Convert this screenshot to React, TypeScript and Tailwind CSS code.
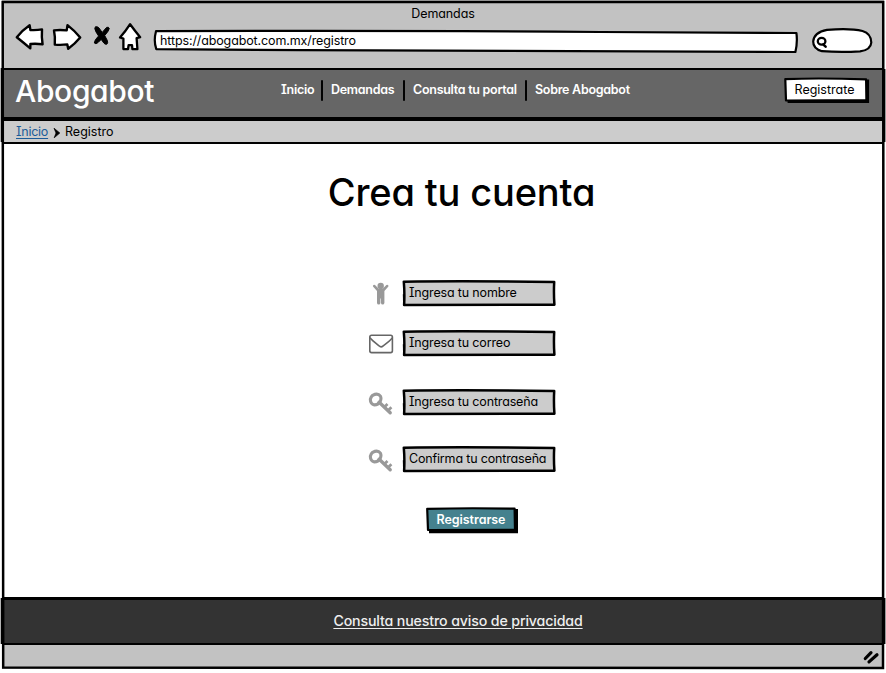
import type { ReactNode } from "react";

function BackIcon() {
  return (
    <svg className="h-[30px] w-[30px] shrink-0" viewBox="15 22 30 30" fill="#fff" stroke="#000" strokeWidth="2.4" strokeLinejoin="round">
      <path d="M16.8 37.2 Q22 30.4 29.6 25.2 L30.4 30 Q37 30.3 42 29.4 Q41.4 38 42.6 44.3 Q36 43.4 30.4 44 L30.3 48.3 Q24 43 16.8 37.2Z" />
    </svg>
  );
}

function ForwardIcon() {
  return (
    <svg className="h-[30px] w-[30px] shrink-0" viewBox="52 22 30 30" fill="#fff" stroke="#000" strokeWidth="2.4" strokeLinejoin="round">
      <path d="M54 30.4 Q60 29.6 66.7 30.4 L67.5 25.1 Q75 31 80.2 37.4 Q75 43.6 68.2 48.8 L67.3 44.4 Q61 45.2 54.8 44.6 Q55.4 37 54 30.4Z" />
    </svg>
  );
}

function StopIcon() {
  return (
    <svg className="h-[30px] w-[22px] shrink-0" viewBox="91 22 22 30" fill="#000" stroke="#000" strokeWidth="1" strokeLinejoin="round">
      <path d="M95.4 26.8 Q97.4 26.2 99 28 L102.2 32.4 L106.6 27.4 Q108.6 26.6 109.3 28.4 Q109 30.6 104.7 35.6 L107.3 40.4 Q108.2 43.2 106.8 44.2 Q104.8 44.6 103.8 43 L101.2 39.4 L98 42.6 Q95.6 44.6 94.4 43 Q94.2 40.6 98.6 36 Q95.2 31.4 94.8 28.6Z" />
    </svg>
  );
}

function HomeIcon() {
  return (
    <svg className="h-[30px] w-[26px] shrink-0" viewBox="117 22 26 30" fill="#fff" stroke="#000" strokeWidth="2.3" strokeLinejoin="round">
      <path d="M130.1 24.2 Q134.6 30.4 140.2 37.2 L136.6 38.2 L137.4 49 L132.4 49.2 L132 45.2 L128.6 45.2 L128 49.2 L123.4 49 L123.4 38.6 L120 37.5 Q125.8 31 130.1 24.2Z" />
    </svg>
  );
}

function SearchField() {
  return (
    <svg className="h-[30px] w-[66px] shrink-0" viewBox="809 26 66 30" fill="none" stroke="#000" strokeLinecap="round">
      <path d="M827 29.9 Q850 28 862.5 31 Q871 33.4 871.3 42.5 Q870.8 50 860 51.4 Q840 52.6 822 51.2 Q813 48.6 813.2 41.5 Q813.8 32.6 827 29.9Z" fill="#fff" strokeWidth="2.2" />
      <ellipse cx="821.6" cy="41.2" rx="3.8" ry="3.4" strokeWidth="2.3" />
      <path d="M823.4 44.6 L825.6 46.6" strokeWidth="2.6" />
    </svg>
  );
}

function PersonIcon() {
  return (
    <svg className="h-[26px] w-[20px]" viewBox="371 280 20 26" fill="#999">
      <circle cx="380.7" cy="284.9" r="3.2" />
      <path d="M373.2 284.2 Q374 283.3 375 284.1 L379 288.1 H382.4 L386.4 284.1 Q387.4 283.3 388.2 284.2 Q388.8 285 388.2 285.8 L384.4 290 V302 Q384.2 303.6 382.7 303.6 Q381.1 303.5 381 302 V297.4 H380.4 V302 Q380.3 303.5 378.7 303.6 Q377.2 303.5 377 302 V290 L373.2 285.8 Q372.6 285 373.2 284.2Z" />
    </svg>
  );
}

function MailIcon() {
  return (
    <svg className="h-[22px] w-[26px]" viewBox="368 333 26 22" fill="none" stroke="#666" strokeWidth="1.6" strokeLinejoin="round">
      <rect x="369.8" y="335.3" width="22.6" height="17.3" rx="1.8" />
      <path d="M370 337.8 Q371.5 339.9 379 345.8 Q381 347.8 383.2 345.8 Q391 339.9 392.2 337.8" />
    </svg>
  );
}

function KeyIcon() {
  return (
    <svg className="h-[24px] w-[26px]" viewBox="368 391 26 24" fill="none" stroke="#999">
      <path d="M372.7 394.3 Q377.8 391.6 380.4 395.2 Q381.6 397.8 380.2 400.4 Q378.2 403.8 374.4 403.9 Q370.1 403 370.4 398.2 Q371 395.7 372.7 394.3Z" strokeWidth="3.1" />
      <path d="M379.2 401.2 L390.2 411.8" strokeWidth="3.4" strokeLinecap="round" />
      <path d="M384.2 406.2 L387.5 403.1 M387.8 409.7 L391.4 406.3" strokeWidth="2.8" />
    </svg>
  );
}

/* Input box with an uneven, pen-drawn outline. */
function SketchInput({ children }: { children: ReactNode }) {
  return (
    <div className="relative flex h-[28px] w-[154px] items-center pb-[2px] pl-[7px]">
      <svg className="absolute inset-0 h-[28px] w-[154px]" viewBox="0 0.7 154 28">
        <path d="M1.8 2.4 Q60 1.6 152.2 2.6 Q151.6 14 152.4 25.4 Q75 25.2 2.1 25.8 Q2.8 14 1.8 2.4Z" fill="#ccc" stroke="#000" strokeWidth="2.5" strokeLinejoin="round" />
        <path d="M1.8 15 L2.1 25" stroke="#000" strokeWidth="2" />
      </svg>
      <span className="relative whitespace-nowrap text-[12.5px] leading-5 tracking-[-0.16px]">{children}</span>
    </div>
  );
}

function Divider() {
  return <span className="h-[21px] w-[2px] rounded-sm bg-black" />;
}

export default function App() {
  return (
    <div className="relative h-[673px] w-[886px] overflow-hidden bg-white font-['Inter','Open_Sans',sans-serif] text-[12.5px] text-black [font-feature-settings:'cv11','cv08']">
      <div className="mx-[2px] flex h-[669px] flex-col">
        <div className="h-[68px] bg-[#c2c2c2]">
          <div className="flex h-[24px] justify-center pt-[4px] leading-5">
            <span className="tracking-[-0.1px]">Demandas</span>
          </div>
          <div className="flex h-[44px] items-start">
            <div className="flex h-[30px] -translate-y-[2px] pl-[13px]">
              <BackIcon />
              <span className="w-[7px]" />
              <ForwardIcon />
              <span className="w-[9px]" />
              <StopIcon />
              <span className="w-[4px]" />
              <HomeIcon />
            </div>
            <div className="relative ml-[9px] mt-[5px] flex h-[25px] w-[648px] items-center pl-[8px]">
              <svg className="absolute inset-0 h-[25px] w-[648px]" viewBox="152 29 648 25">
                <path d="M156 31.2 Q400 30.4 600 32 L796.4 33 Q797.7 42 795.4 52 Q500 51 300 50.2 L156.3 49.2 Q153.4 41 156 31.2Z" fill="#fff" stroke="#000" strokeWidth="2.2" strokeLinejoin="round" />
              </svg>
              <span className="relative -mt-[2px] leading-5 tracking-[-0.12px]">https://abogabot.com.mx/registro</span>
            </div>
            <div className="ml-[9px] mt-[2px]"><SearchField /></div>
          </div>
        </div>

        <header className="flex h-[51px] items-center border-b-[2px] border-t-[2px] border-black bg-[#666] pb-[6px] text-white">
          <div className="w-[279px] pl-[13px] text-[30px] font-medium leading-[44px] tracking-[-0.35px]">Abogabot</div>
          <nav className="flex h-[42px] items-center gap-[9px] whitespace-nowrap font-semibold tracking-[-0.28px]">
            <a className="w-[31px]">Inicio</a>
            <Divider />
            <a className="-ml-[1px] w-[63px]">Demandas</a>
            <Divider />
            <a className="-ml-[1px] w-[103px]">Consulta tu portal</a>
            <Divider />
            <a className="-ml-[1px] w-[95px]">Sobre Abogabot</a>
          </nav>
          <button className="relative ml-auto mr-[14px] flex h-[27px] w-[87px] items-center justify-center pb-[2px] pr-[4px] text-black">
            <svg className="absolute inset-0 h-[27px] w-[87px]" viewBox="782.4 76.6 87 27">
              <path d="M787 80 L868.5 79 L868.5 102.7 L787 102.7Z" fill="#000" />
              <path d="M784.7 78.7 Q820 77.4 865.5 79 L865.8 99.8 L785.4 100.1Z" fill="#fff" stroke="#000" strokeWidth="2.2" strokeLinejoin="round" />
            </svg>
            <span className="relative leading-5">Registrate</span>
          </button>
        </header>

        <div className="flex h-[25px] items-center border-b-[2px] border-t-[2px] border-black bg-[#ccc] pl-[14px] pt-[2px]">
          <a className="w-[37px] tracking-[-0.25px] text-[#1b5c99] underline underline-offset-2">Inicio</a>
          <svg className="h-[10px] w-[8px]" viewBox="0 0 8 10"><path d="M1 .2 L6.8 5 L1.2 9.8 L3 5Z" fill="#000" stroke="#000" strokeWidth=".7" /></svg>
          <span className="ml-[4px]">Registro</span>
        </div>

        <main className="flex h-[453px] flex-col items-center">
          <h1 className="ml-[37px] mt-[21px] h-[54px] whitespace-nowrap text-[38px] font-[450] leading-[54px] tracking-[-0.15px]">Crea tu cuenta</h1>
          <div className="ml-[39px] flex w-[189px] flex-col">
            <div className="mt-[61px] flex h-[28px] items-center">
              <span className="flex w-[34px] justify-start pl-[3px]"><PersonIcon /></span>
              <SketchInput>Ingresa tu nombre</SketchInput>
            </div>
            <div className="mt-[22px] flex h-[28px] items-center">
              <span className="w-[34px]"><MailIcon /></span>
              <SketchInput>Ingresa tu correo</SketchInput>
            </div>
            <div className="mt-[31px] flex h-[28px] items-center">
              <span className="w-[34px] pt-[2px]"><KeyIcon /></span>
              <SketchInput>Ingresa tu contraseña</SketchInput>
            </div>
            <div className="mt-[29px] flex h-[28px] items-center">
              <span className="w-[34px] pt-[2px]"><KeyIcon /></span>
              <SketchInput>Confirma tu contraseña</SketchInput>
            </div>
            <button className="relative ml-[57px] mt-[32px] flex h-[28px] w-[94px] items-center justify-center pb-[1px] pr-[2px] font-semibold tracking-[-0.05px] text-white">
              <svg className="absolute inset-0 h-[28px] w-[94px]" viewBox="425 506 94 28">
                <path d="M429 509 L518 509 L518 533.3 L429 533.3Z" fill="#000" />
                <path d="M427.2 508.8 Q470 507.8 514.6 508.7 L515 529.8 L428 530Z" fill="#45818e" stroke="#000" strokeWidth="2.2" strokeLinejoin="round" />
              </svg>
              <span className="relative leading-5">Registrarse</span>
            </button>
          </div>
        </main>

        <footer className="flex h-[48px] items-center justify-center border-b-[2px] border-t-[3px] border-black bg-[#333] pb-[2px] pl-[30px] text-[#eee]">
          <a className="text-[14.2px] font-medium tracking-[-0.14px] underline underline-offset-2">Consulta nuestro aviso de privacidad</a>
        </footer>
        <div className="flex h-[24px] items-center justify-end bg-[#c2c2c2] pr-[4px]">
          <svg className="h-[16px] w-[18px]" viewBox="862 649.5 18 16" stroke="#000" strokeWidth="3.2" strokeLinecap="round">
            <path d="M865.3 659 L871 653.2 M869 662.4 L877 655.2" />
          </svg>
        </div>
      </div>

      {/* Pen-drawn window outline over the edges of every band */}
      <svg className="pointer-events-none absolute inset-0 h-[673px] w-[886px]" viewBox="0 0 886 673" fill="none" stroke="#000" strokeWidth="2.5">
        <path d="M2.7 2 Q400 1.4 883.2 2 L883.4 300 L883 668 Q400 667 3.2 667.6 Q2.4 300 2.7 2Z" />
        <path d="M1.5 68 V142 M1.5 598 V644 M884.6 69 V142 M884.6 598 V644" strokeWidth="1.6" />
      </svg>
    </div>
  );
}
